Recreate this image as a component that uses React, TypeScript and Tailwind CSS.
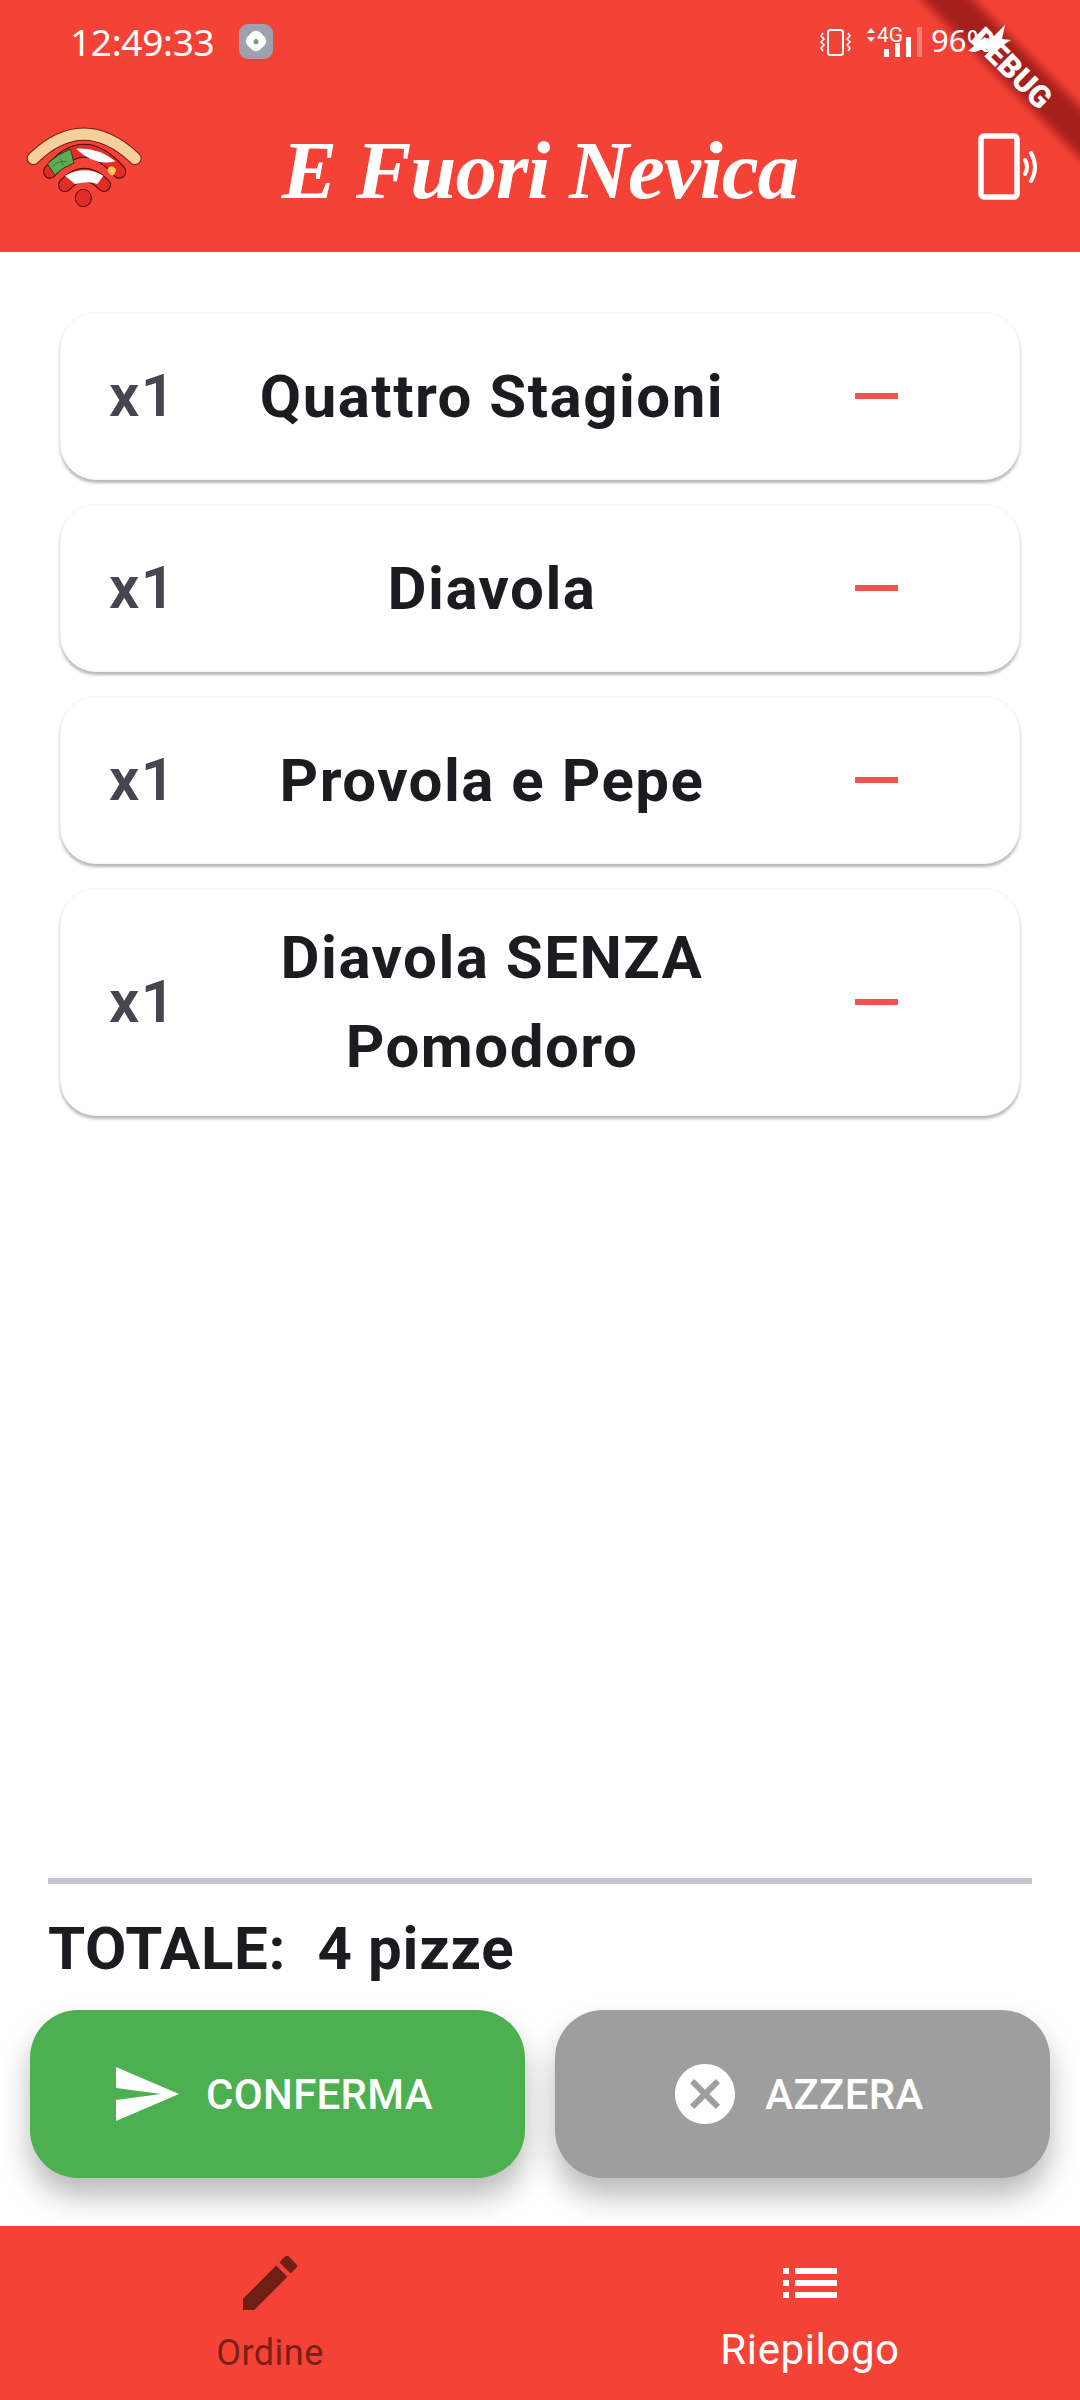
import { MdCancel, MdEdit, MdList, MdSend } from "react-icons/md";

const ITEMS = ["Quattro Stagioni", "Diavola", "Provola e Pepe", "Diavola SENZA Pomodoro"];

function PizzaLogo() {
  return (
    <svg viewBox="0 0 450 330" className="w-[150px] h-[110px] self-start mt-[26px] ml-[10px]">
      <path d="M70 145 Q220 0 375 145" fill="none" stroke="#5a1410" strokeWidth="40" strokeLinecap="round" opacity="0.85" />
      <path d="M70 145 Q220 0 375 145" fill="none" stroke="#f6cf9d" strokeWidth="34" strokeLinecap="round" />
      <path d="M120 185 Q220 59 328 185" fill="none" stroke="#3a0d0b" strokeWidth="42" strokeLinecap="round" />
      <path d="M120 185 Q220 59 328 185" fill="none" stroke="#e22d27" strokeWidth="36" strokeLinecap="round" />
      <path d="M112 162 Q145 130 182 118 L192 160 Q160 170 135 195 Z" fill="#5cab56" stroke="#2a3a1c" strokeWidth="3" />
      <path d="M128 168 Q150 150 170 155 M150 145 L160 165" fill="none" stroke="#2a5a2a" strokeWidth="2" />
      <path d="M198 116 Q265 112 316 154 Q255 170 198 116 Z" fill="#ffffff" />
      <path d="M292 178 Q305 160 318 178 Q315 198 305 196 Q295 192 292 178 Z" fill="#fbc94f" />
      <path d="M165 225 Q222 163 282 225" fill="none" stroke="#3a0d0b" strokeWidth="42" strokeLinecap="round" />
      <path d="M165 225 Q222 163 282 225" fill="none" stroke="#e22d27" strokeWidth="36" strokeLinecap="round" />
      <path d="M165 197 Q225 165 280 197 L262 222 Q240 212 195 222 Z" fill="#ffffff" />
      <ellipse cx="220" cy="264" rx="24" ry="26" fill="#e22d27" stroke="#3a0d0b" strokeWidth="3" />
    </svg>
  );
}

function PhoneWaves() {
  return (
    <svg viewBox="0 0 62 68" className="w-[62px] h-[68px]" fill="none" stroke="#ffffff">
      <rect x="3" y="3" width="36" height="61" rx="3" strokeWidth="5.5" />
      <path d="M47 27 Q51 34 47 41" strokeWidth="4" strokeLinecap="round" />
      <path d="M53 20 Q61 34 53 48" strokeWidth="4" strokeLinecap="round" />
    </svg>
  );
}

function StatusIcons() {
  return (
    <svg viewBox="0 0 104 36" className="w-[104px] h-[36px]" fill="none" stroke="#ffffff" strokeWidth="2">
      <rect x="8" y="4" width="15" height="25" rx="2.5" />
      <path d="M3 7 L1 10 L4 13 L1 16 L4 19 L1 22 L3 25" strokeWidth="1.6" />
      <path d="M28 7 L30 10 L27 13 L30 16 L27 19 L30 22 L28 25" strokeWidth="1.6" />
      <path d="M47 7 L51 2 L55 7 Z M47 11 L51 16 L55 11 Z" fill="#ffffff" stroke="none" />
      <rect x="64" y="23" width="5" height="8" fill="#ffffff" stroke="none" />
      <rect x="75" y="17" width="5" height="14" fill="#ffffff" stroke="none" />
      <rect x="86" y="11" width="5" height="20" fill="#ffffff" stroke="none" />
      <rect x="97" y="1" width="5" height="30" fill="#ffffff" fillOpacity="0.3" stroke="none" />
    </svg>
  );
}

function OrderRow({ name }: { name: string }) {
  return (
    <div className="flex items-center min-h-[168px] py-[24px] pl-[48px] rounded-[36px] bg-white border border-[#f5f5f5] shadow-[0_3px_3px_rgba(0,0,0,0.28)]">
      <span className="w-[103px] shrink-0 text-[60px] leading-[60px] font-semibold tracking-[1.5px] text-[#49454f]">x1</span>
      <span className="w-[560px] shrink-0 text-center text-[60px] leading-[89px] font-bold tracking-[1.5px] text-[#1d1b20]">{name}</span>
      <span className="ml-[83px] w-[43px] h-[6px] bg-[#ef5350]" />
    </div>
  );
}

export default function App() {
  return (
    <div className="relative flex flex-col w-[1080px] h-[2400px] overflow-hidden bg-white font-['Roboto',sans-serif]">
      <header className="bg-[#f44336] h-[252px] shrink-0 text-white">
        <div className="relative z-10 flex items-center h-[84px] pl-[70px] pb-[2px]">
          <span className="text-[37px] font-normal font-['Noto_Sans',sans-serif] leading-none tracking-[-0.3px]">12:49:33</span>
          <span className="ml-[25px] flex items-center justify-center w-[34px] h-[35px] rounded-[9px] bg-[#9ea1ad]">
            <span className="flex items-center justify-center w-[18px] h-[18px] rounded-[6px] rotate-45 bg-white">
              <span className="w-[5px] h-[5px] rounded-full bg-[#7f9a80]" />
            </span>
          </span>
          <div className="absolute left-[820px] top-[26px]">
            <StatusIcons />
          </div>
          <span className="absolute left-[877px] top-[20px] text-[21px] leading-[30px]">4G</span>
          <span className="absolute left-[931px] top-[20px] text-[31px] leading-[40px] font-['Noto_Sans',sans-serif]">96%</span>
          <svg viewBox="0 0 46 30" className="absolute left-[966px] top-[25px] w-[46px] h-[30px]" fill="#ffffff">
            <path d="M2 26 L19 12 L22 17 L39 0 L36 14 L45 15 L25 28 L22 22 L9 27 Z" />
          </svg>
        </div>
        <div className="grid grid-cols-[270px_540px_270px] h-[168px]">
          <PizzaLogo />
          <h1 className="flex items-center justify-center pt-[4px] whitespace-nowrap text-[83px] leading-none italic font-bold font-['Liberation_Serif',serif] tracking-[-1px]">E Fuori Nevica</h1>
          <div className="flex items-center justify-end pr-[40px] pb-[2px]">
            <PhoneWaves />
          </div>
        </div>
      </header>

      <main className="flex flex-col gap-[24px] px-[60px] pt-[60px]">
        {ITEMS.map((item) => (
          <OrderRow key={item} name={item} />
        ))}
      </main>

      <div className="flex-1" />

      <section className="shrink-0">
        <div className="mx-[48px] h-[6px] bg-[#cac4d0]" />
        <p className="mx-[48px] mt-[29px] text-[60px] leading-[72px] font-bold tracking-[0.7px] text-[#1d1b20]">TOTALE:&nbsp; 4 pizze</p>
        <div className="grid grid-cols-2 gap-[30px] px-[30px] mt-[25px] mb-[48px]">
          <button className="flex items-center justify-center gap-[24px] h-[168px] pr-[12px] rounded-[48px] bg-[#4caf50] text-white text-[42px] font-medium tracking-[0.3px] shadow-[0_18px_30px_rgba(0,0,0,0.28)]">
            <MdSend size={72} />
            CONFERMA
          </button>
          <button className="flex items-center justify-center gap-[24px] h-[168px] pr-[12px] rounded-[48px] bg-[#9e9e9e] text-white text-[42px] font-medium tracking-[0.3px] shadow-[0_18px_30px_rgba(0,0,0,0.28)]">
            <MdCancel size={72} />
            AZZERA
          </button>
        </div>
      </section>

      <nav className="grid grid-cols-2 h-[174px] shrink-0 bg-[#f44336]">
        <div className="flex flex-col items-center pt-[21px] text-[#701f16]">
          <MdEdit size={72} />
          <span className="mt-[12px] text-[36px] leading-[44px] tracking-[0.5px] text-[#7a2018]">Ordine</span>
        </div>
        <div className="flex flex-col items-center pt-[21px] text-white">
          <MdList size={72} />
          <span className="mt-[6px] text-[42px] leading-[50px] tracking-[0.6px]">Riepilogo</span>
        </div>
      </nav>

      <div className="absolute left-[854px] top-[48px] flex items-center justify-center w-[320px] h-[36px] pt-[7px] rotate-45">
        <div className="absolute inset-0 bg-[#a51f1b] blur-[5px]" />
        <span className="relative text-[31px] leading-none font-black text-white">DEBUG</span>
      </div>
    </div>
  );
}
